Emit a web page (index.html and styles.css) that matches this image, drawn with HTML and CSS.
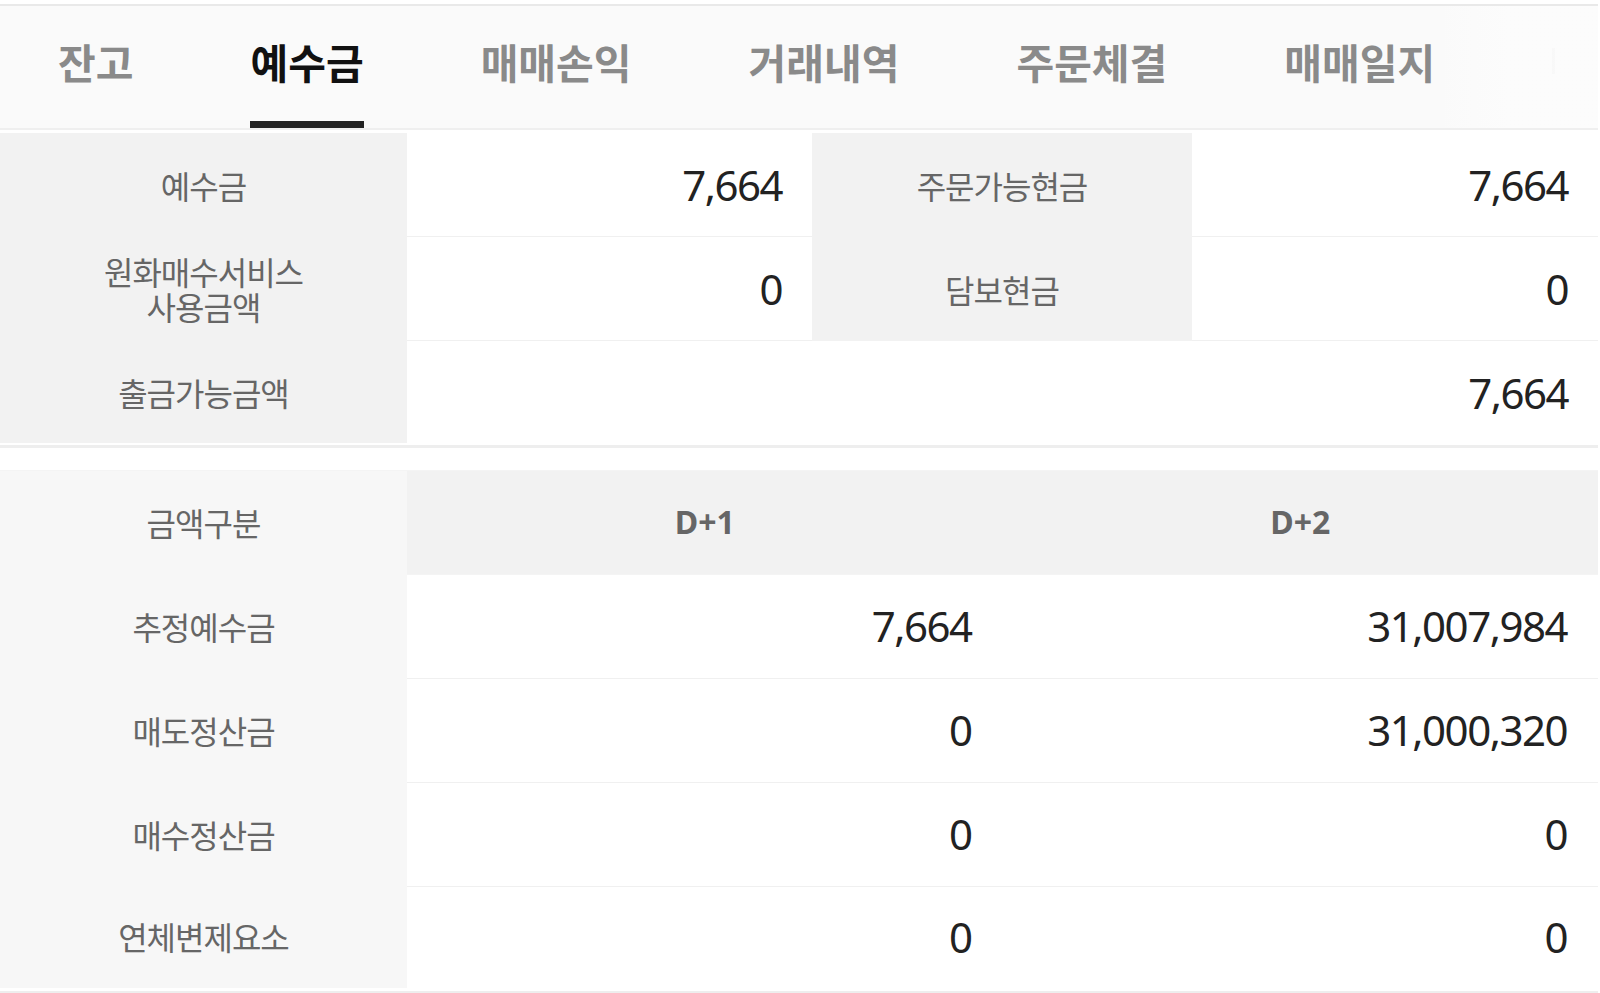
FILE: index.html
```html
<!DOCTYPE html>
<html lang="ko">
<head>
<meta charset="utf-8">
<title>예수금</title>
<link rel="stylesheet" href="styles.css">
</head>
<body>
<div class="page">
  <nav class="tabbar">
    <div class="tabs">
      <span class="tab">잔고</span>
      <span class="tab active">예수금</span>
      <span class="tab">매매손익</span>
      <span class="tab">거래내역</span>
      <span class="tab">주문체결</span>
      <span class="tab">매매일지</span>
      <span class="tab-ghost"><i class="ghost-stroke"></i></span>
    </div>
    <div class="fade"></div>
  </nav>

  <section class="summary">
    <div class="lbl">예수금</div>
    <div class="val">7,664</div>
    <div class="lbl">주문가능현금</div>
    <div class="val">7,664</div>

    <div class="lbl">원화매수서비스<br>사용금액</div>
    <div class="val">0</div>
    <div class="lbl">담보현금</div>
    <div class="val">0</div>

    <div class="lbl last">출금가능금액</div>
    <div class="val wide">7,664</div>
  </section>

  <section class="detail">
    <div class="rlbl">금액구분</div>
    <div class="hd">D+1</div>
    <div class="hd">D+2</div>

    <div class="rlbl">추정예수금</div>
    <div class="dv">7,664</div>
    <div class="dv">31,007,984</div>

    <div class="rlbl">매도정산금</div>
    <div class="dv">0</div>
    <div class="dv">31,000,320</div>

    <div class="rlbl">매수정산금</div>
    <div class="dv">0</div>
    <div class="dv">0</div>

    <div class="rlbl last">연체변제요소</div>
    <div class="dv last">0</div>
    <div class="dv last">0</div>
  </section>
</div>
</body>
</html>
```

FILE: styles.css
```css
html, body {
  margin: 0;
  padding: 0;
  background: #ffffff;
}

body {
  font-family: "Noto Sans", "Noto Sans CJK KR", sans-serif;
  color: #222222;
  width: 1600px;
  height: 993px;
  overflow: hidden;
}

.page {
  width: 1598px;
  padding-top: 4px;
}

/* ---------- Tabs ---------- */
.tabbar {
  position: relative;
  height: 122px;
  background: #fafafa;
  border-top: 2px solid #e9e9e9;
  border-bottom: 2px solid #efefef;
  overflow: hidden;
}

.tabs {
  display: flex;
  align-items: stretch;
  height: 100%;
  padding-left: 58px;
  gap: 117px;
  white-space: nowrap;
}

.tab {
  display: flex;
  align-items: center;
  height: 100%;
  box-sizing: border-box;
  padding-bottom: 12px;
  font-family: "Noto Sans CJK KR", sans-serif;
  font-size: 41px;
  font-weight: 700;
  letter-spacing: 0;
  color: #8a8a8a;
}

.tab.active {
  color: #111111;
  border-bottom: 7px solid #222222;
  padding-bottom: 5px;
}

.tab-ghost {
  display: flex;
  align-items: center;
  height: 100%;
  box-sizing: border-box;
  padding-bottom: 12px;
}

.ghost-stroke {
  display: block;
  width: 3px;
  height: 26px;
  background: #8a8a8a;
}

.fade {
  position: absolute;
  top: 0;
  right: 0;
  width: 160px;
  height: 100%;
  background: linear-gradient(to right, rgba(250,250,250,0) 0, rgba(252,252,252,0.97) 70px, rgba(252,252,252,0.97) 100%);
}

/* ---------- Summary table ---------- */
.summary {
  display: grid;
  grid-template-columns: 407px 405px 380px 406px;
  grid-auto-rows: 104px;
  margin-top: 3px;
  border-bottom: 3px solid #eeeeee;
}

.lbl {
  display: flex;
  align-items: center;
  justify-content: center;
  text-align: center;
  background: #f2f2f2;
  font-family: "Noto Sans CJK KR", sans-serif;
  font-size: 32px;
  letter-spacing: -1px;
  line-height: 35px;
  color: #666666;
}

.lbl.last {
  height: 102px;
}

.val {
  display: flex;
  align-items: center;
  justify-content: flex-end;
  padding-right: 30px;
  box-sizing: border-box;
  background: #ffffff;
  border-bottom: 1px solid #f0f0f0;
  font-size: 42px;
  letter-spacing: -1.5px;
  color: #222222;
}

.val.wide {
  grid-column: 2 / 5;
  border-bottom: none;
  height: 102px;
}

/* ---------- Detail table ---------- */
.detail {
  display: grid;
  grid-template-columns: 407px 1fr 1fr;
  grid-auto-rows: 104px;
  margin-top: 22px;
  border-top: 1px solid #f4f4f4;
  border-bottom: 3px solid #eeeeee;
}

.rlbl {
  display: flex;
  align-items: center;
  justify-content: center;
  padding-bottom: 3px;
  box-sizing: border-box;
  background: #f7f7f7;
  font-family: "Noto Sans CJK KR", sans-serif;
  font-size: 32px;
  letter-spacing: -1px;
  color: #666666;
}

.hd {
  display: flex;
  align-items: center;
  justify-content: center;
  padding-bottom: 3px;
  box-sizing: border-box;
  background: #f2f2f2;
  font-size: 32px;
  font-weight: 700;
  color: #666666;
  border-bottom: 1px solid #f4f4f4;
}

.dv {
  display: flex;
  align-items: center;
  justify-content: flex-end;
  padding-right: 31px;
  padding-bottom: 3px;
  box-sizing: border-box;
  border-bottom: 1px solid #f0f0f0;
  font-size: 42px;
  letter-spacing: -1.5px;
  color: #222222;
}

.rlbl.last, .dv.last {
  height: 101px;
  border-bottom: none;
}
```
